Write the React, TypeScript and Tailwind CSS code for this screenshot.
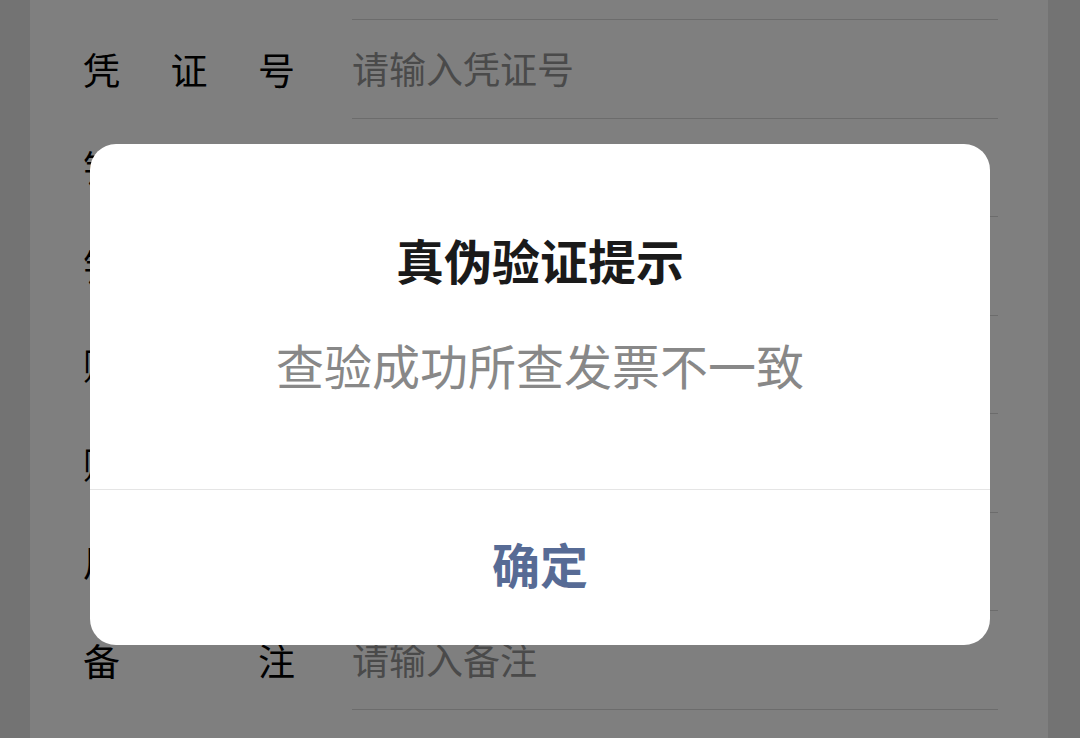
import { ChevronRight } from 'lucide-react';

interface Row {
  label: string[];
  placeholder?: string;
  select?: boolean;
}

const rows: Row[] = [
  { label: [] },
  { label: ['凭', '证', '号'], placeholder: '请输入凭证号' },
  { label: ['销', '方', '名', '称'], select: true },
  { label: ['销', '方', '税', '号'], placeholder: '请输入销方税号' },
  { label: ['购', '方', '名', '称'], placeholder: '请输入购方名称' },
  { label: ['购', '方', '税', '号'], placeholder: '请输入购方税号' },
  { label: ['用', '途'], placeholder: '请输入用途' },
  { label: ['备', '注'], placeholder: '请输入备注' },
];

function FormRow({ row }: { row: Row }) {
  return (
    <div className="flex h-[98.5px] shrink-0 items-stretch pl-[53px] pr-[50px]">
      <div className="flex w-[212px] items-center justify-between text-[37px] text-black">
        {row.label.map((c, i) => (
          <span key={i}>{c}</span>
        ))}
      </div>
      <div className="ml-[57px] flex flex-1 items-center border-b border-[#d9d9d9] text-[37px]">
        {row.select ? (
          <div className="ml-auto flex items-center text-black">
            选择
            <ChevronRight size={34} className="text-[#999]" />
          </div>
        ) : (
          row.placeholder && <span className="text-[#949494]">{row.placeholder}</span>
        )}
      </div>
    </div>
  );
}

export default function App() {
  return (
    <div
      className="relative h-[738px] w-[1080px] overflow-hidden bg-[#e6e6e6]"
      style={{ fontFamily: '"Noto Sans CJK SC", "Noto Sans", sans-serif' }}
    >
      <div className="ml-[30px] flex h-full w-[1018px] flex-col bg-white">
        <div className="mt-[-78.5px] flex flex-col">
          {rows.map((r, i) => (
            <FormRow key={i} row={r} />
          ))}
        </div>
      </div>

      <div className="absolute inset-0 bg-black/50" />

      <div className="absolute left-[90px] top-[144px] flex h-[501px] w-[900px] flex-col overflow-hidden rounded-[26px] bg-white">
        <div className="flex h-[345px] flex-col items-center pt-[85px]">
          <h2 className="text-[48px] font-bold leading-[60px] text-[#1a1a1a]">真伪验证提示</h2>
          <p className="mt-[45px] text-[48px] leading-[60px] text-[#888888]">查验成功所查发票不一致</p>
        </div>
        <button className="flex flex-1 items-center justify-center border-t border-[#e5e5e5] pb-[10px] text-[48px] font-bold text-[#576b95]">
          确定
        </button>
      </div>
    </div>
  );
}
